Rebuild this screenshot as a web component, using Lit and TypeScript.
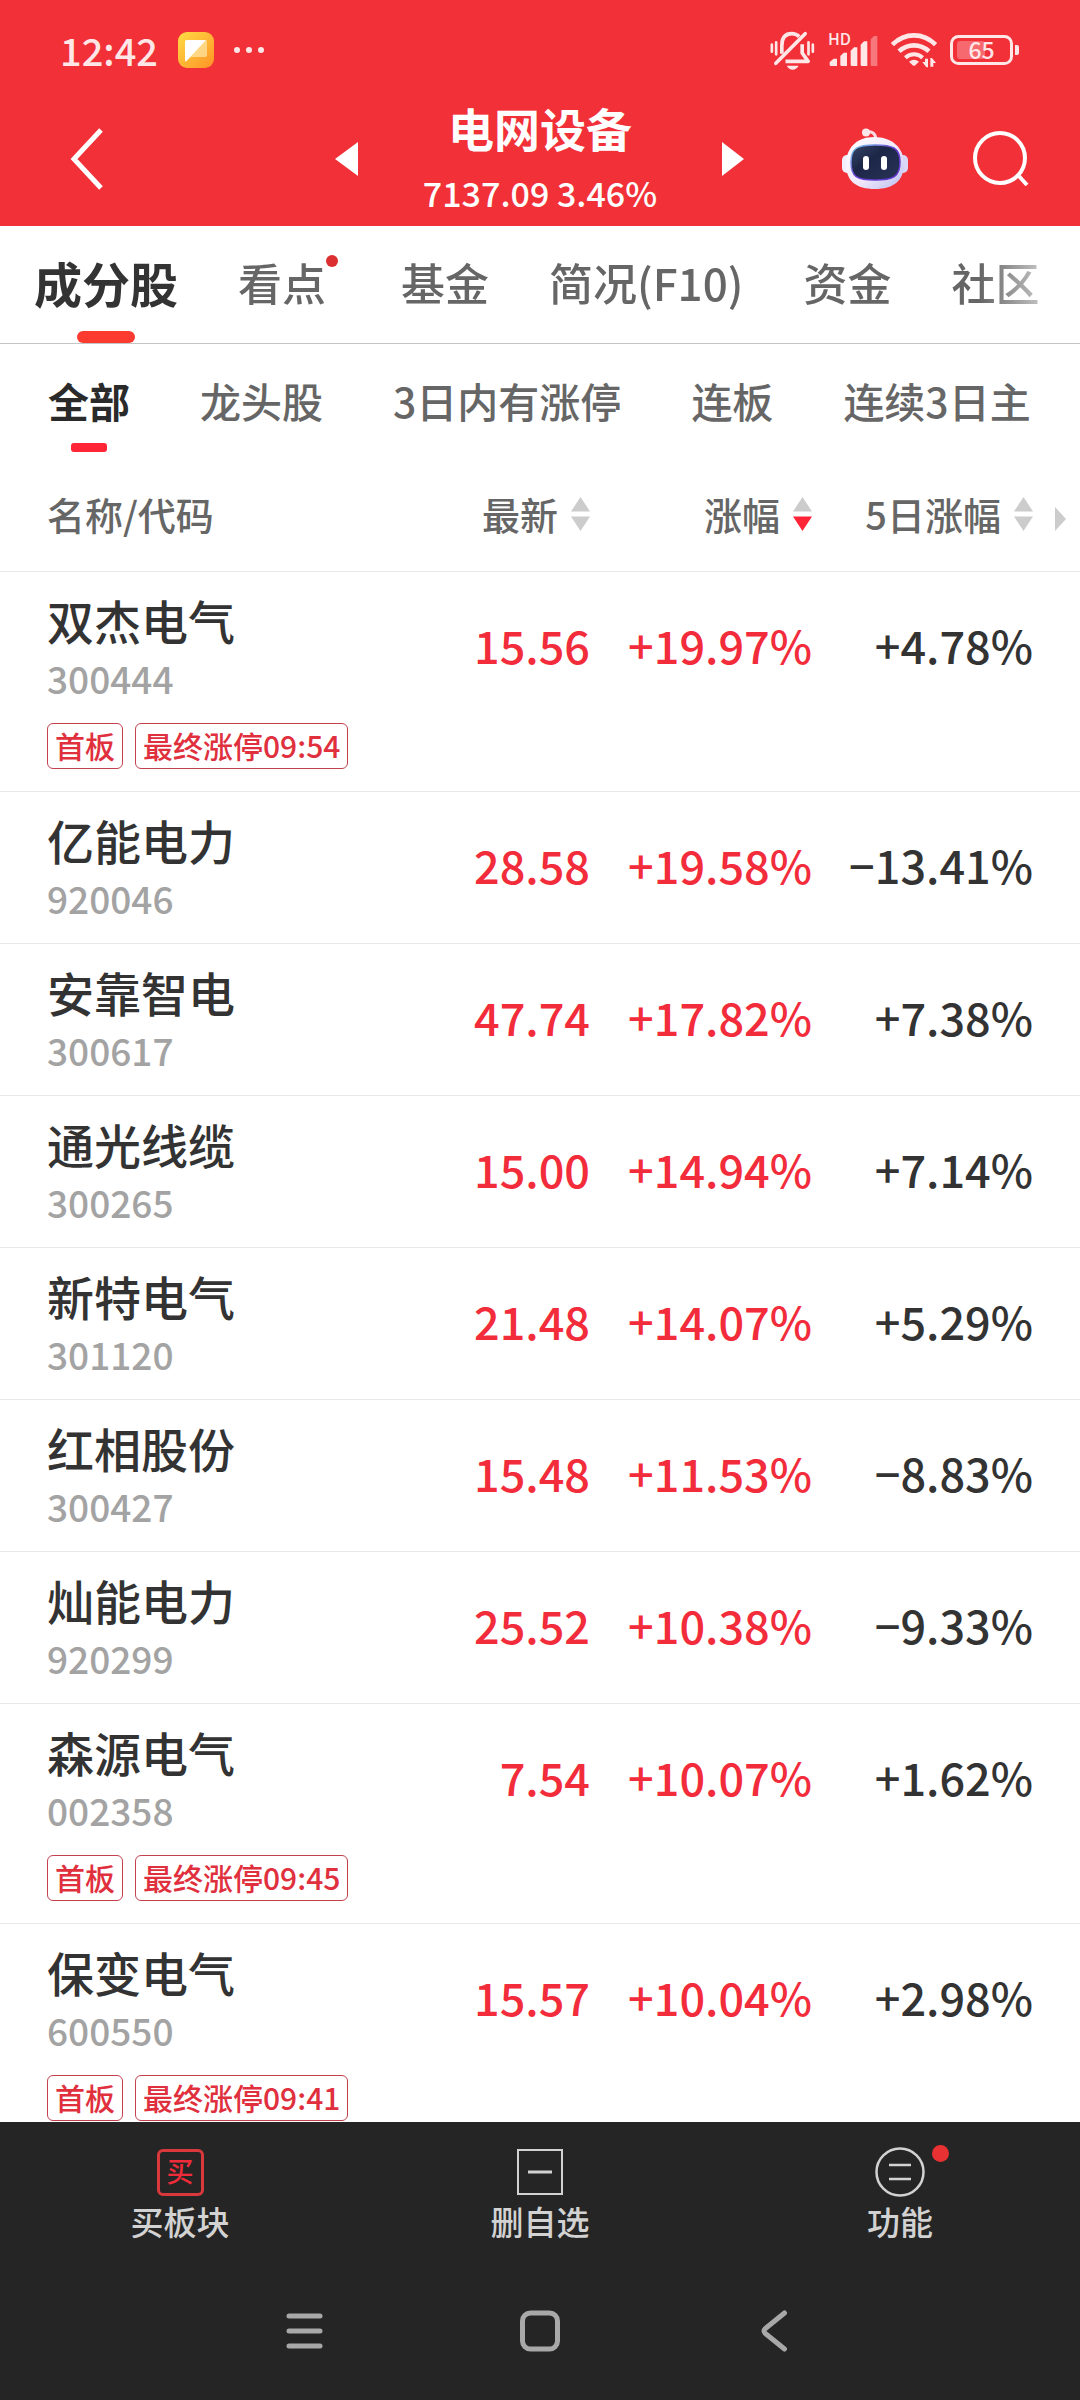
import { LitElement, html, css, svg } from "lit";
import { customElement, property, state } from "lit/decorators.js";
import { classMap } from "lit/directives/class-map.js";

interface Stock {
  name: string;
  code: string;
  price: string;
  change: string;
  change5: string;
  tags?: string[];
}

const STOCKS: Stock[] = [
  { name: "双杰电气", code: "300444", price: "15.56", change: "+19.97%", change5: "+4.78%", tags: ["首板", "最终涨停09:54"] },
  { name: "亿能电力", code: "920046", price: "28.58", change: "+19.58%", change5: "−13.41%" },
  { name: "安靠智电", code: "300617", price: "47.74", change: "+17.82%", change5: "+7.38%" },
  { name: "通光线缆", code: "300265", price: "15.00", change: "+14.94%", change5: "+7.14%" },
  { name: "新特电气", code: "301120", price: "21.48", change: "+14.07%", change5: "+5.29%" },
  { name: "红相股份", code: "300427", price: "15.48", change: "+11.53%", change5: "−8.83%" },
  { name: "灿能电力", code: "920299", price: "25.52", change: "+10.38%", change5: "−9.33%" },
  { name: "森源电气", code: "002358", price: "7.54", change: "+10.07%", change5: "+1.62%", tags: ["首板", "最终涨停09:45"] },
  { name: "保变电气", code: "600550", price: "15.57", change: "+10.04%", change5: "+2.98%", tags: ["首板", "最终涨停09:41"] },
];

const FONT = css`"Noto Sans CJK SC", sans-serif`;

const resets = css`
  :host,
  * {
    box-sizing: border-box;
  }
  button {
    appearance: none;
    border: 0;
    padding: 0;
    margin: 0;
    background: none;
    font: inherit;
    color: inherit;
    white-space: nowrap;
    cursor: pointer;
  }
  svg {
    display: block;
    flex: none;
  }
`;

@customElement("status-bar")
class StatusBar extends LitElement {
  static styles = [
    resets,
    css`
      :host {
        display: flex;
        align-items: center;
        justify-content: space-between;
        height: 92px;
        padding: 8px 60px 0;
        color: #ffe6e7;
      }
      .group {
        display: flex;
        align-items: center;
      }
      .left {
        gap: 20px;
      }
      .right {
        gap: 13px;
      }
      .time {
        font-size: 38px;
        line-height: 48px;
        font-weight: 500;
      }
      .signal,
      .battery {
        position: relative;
      }
      .hd {
        position: absolute;
        left: 0;
        top: 0;
        font-size: 16px;
        line-height: 12px;
        font-weight: 500;
      }
      .level {
        position: absolute;
        left: 0;
        top: 0;
        width: 63px;
        font-size: 23px;
        line-height: 28px;
        font-weight: 500;
        text-align: center;
      }
    `,
  ];

  render() {
    return html`
      <div class="group left">
        <span class="time">12:42</span>
        <svg width="36" height="36" viewBox="0 0 36 36" aria-hidden="true">
          <defs>
            <linearGradient id="note" x1="0" y1="0" x2="1" y2="1">
              <stop offset="0" stop-color="#ffdc45" />
              <stop offset="1" stop-color="#ff9226" />
            </linearGradient>
          </defs>
          <rect width="36" height="36" rx="9" fill="url(#note)" />
          <path d="M9 8H27.500Q29 8 29 10V23Q29 25 27 25H13L7 29.500V10Q7 8 9 8Z" fill="#ffe3a0" opacity=".75" />
          <path d="M9 8H28L8.500 29Q7 30 7 28V10Q7 8 9 8Z" fill="#fff" />
        </svg>
        <svg width="32" height="8" viewBox="-2 0 32 8" fill="currentColor" aria-hidden="true">
          <circle cx="1" cy="4" r="3" /><circle cx="13" cy="4" r="3" /><circle cx="25" cy="4" r="3" />
        </svg>
      </div>
      <div class="group right">
        <svg width="45" height="39" viewBox="32 18 134 117" fill="none" stroke="currentColor" stroke-width="9" aria-hidden="true">
          <path d="M37 59V80M50 52V88M147 52V88M160 59V80" stroke-width="8" stroke-linecap="round" />
          <path d="M67 86V62C67 37 79 26 97 26C107 26 113 29 119 35" stroke-width="11" />
          <path d="M49 115L137 26" stroke-linecap="round" stroke-width="11" />
          <path d="M128 58V84L146 109H78" stroke-linejoin="round" stroke-width="11" />
          <path d="M82 122H117Q112 133 99.500 134Q87 133 82 122Z" fill="currentColor" stroke="none" />
        </svg>
        <div class="signal">
          <svg width="50" height="36" viewBox="202 20 150 108" fill="currentColor" aria-hidden="true">
            <path d="M207 118V110L219 100H229V122H211Q207 122 207 118Z" />
            <path d="M239 118V92L249 82H259V122H243Q239 122 239 118Z" />
            <path d="M270 118V76L280 66H290V122H274Q270 122 270 118Z" />
            <path d="M300 118V58L310 48H320V122H304Q300 122 300 118Z" />
            <path d="M330 118V42L340 32H350V122H334Q330 122 330 118Z" opacity=".4" />
          </svg>
          <span class="hd">HD</span>
        </div>
        <svg width="46" height="36" viewBox="390 24 138 108" fill="none" stroke="currentColor" stroke-width="14" aria-hidden="true">
          <path d="M394 62Q422 34 459 34Q496 34 524 62" />
          <path d="M414 82Q434 64 459 64Q484 64 504 82" />
          <path d="M433 101Q444 91 459 91Q474 91 485 101" stroke-width="12" />
          <path d="M444 113Q459 101 474 113L463 124Q459 127 455 124Z" fill="currentColor" stroke="none" />
          <path d="M484 114H492V104H501V130H496ZM508 130V102H513L525 117H517V128H508Z" fill="currentColor" stroke="none" />
        </svg>
        <div class="battery">
          <svg width="70" height="30" viewBox="0 0 70 30" aria-hidden="true">
            <rect x="7" y="6" width="28" height="18" rx="3" fill="#fff" opacity=".28" />
            <rect x="1.500" y="1.500" width="60" height="27" rx="7" fill="none" stroke="currentColor" stroke-width="3" />
            <path d="M65 10H67Q69 10 69 12V18Q69 20 67 20H65Z" fill="currentColor" />
          </svg>
          <span class="level">65</span>
        </div>
      </div>
    `;
  }
}

@customElement("board-header")
class BoardHeader extends LitElement {
  @property() name = "";
  @property() quote = "";

  static styles = [
    resets,
    css`
      :host {
        display: grid;
        grid-template-columns: 1fr auto 1fr;
        align-items: center;
        height: 134px;
        padding: 0 51px;
        color: #fff;
      }
      .center {
        display: flex;
        align-items: center;
        justify-content: center;
        gap: 65px;
      }
      .titles {
        text-align: center;
      }
      .title {
        margin: 0;
        font-size: 46px;
        line-height: 68px;
        font-weight: 700;
      }
      .quote {
        margin: 0;
        font-size: 34px;
        line-height: 64px;
        font-weight: 500;
      }
      .right {
        display: flex;
        align-items: center;
        justify-content: flex-end;
        gap: 65px;
      }
      .back {
        justify-self: start;
        padding: 0 19px;
      }
    `,
  ];

  render() {
    return html`
      <button class="back" aria-label="返回">
        <svg width="34" height="62" viewBox="0 0 34 62" fill="none" stroke="#fff" stroke-width="5">
          <path d="M31 2L4 31L31 60" />
        </svg>
      </button>
      <div class="center">
        <button aria-label="上一个">
          <svg width="23" height="34" viewBox="0 0 23 34" fill="#fff"><path d="M23 0V34L0 17Z" /></svg>
        </button>
        <div class="titles">
          <h1 class="title">${this.name}</h1>
          <p class="quote">${this.quote}</p>
        </div>
        <button aria-label="下一个">
          <svg width="23" height="34" viewBox="0 0 23 34" fill="#fff"><path d="M0 0V34L22 17Z" /></svg>
        </button>
      </div>
      <div class="right">
        <button aria-label="智能助手">
          <svg width="66" height="62" viewBox="0 0 66 62">
            <defs>
              <linearGradient id="shell" x1="0" y1="0" x2="1" y2="1">
                <stop offset="0" stop-color="#fff" />
                <stop offset=".55" stop-color="#f1e9fb" />
                <stop offset="1" stop-color="#b9bdf0" />
              </linearGradient>
              <linearGradient id="rim" x1="0" y1="0" x2="1" y2="1">
                <stop offset="0" stop-color="#7fd6ee" />
                <stop offset=".5" stop-color="#6a3fd0" />
                <stop offset="1" stop-color="#5b35c8" />
              </linearGradient>
              <linearGradient id="face" x1="0" y1="0" x2="1" y2="1">
                <stop offset="0" stop-color="#394668" />
                <stop offset=".4" stop-color="#1c2748" />
                <stop offset="1" stop-color="#273256" />
              </linearGradient>
            </defs>
            <path d="M23 4Q33 2 34 11" fill="none" stroke="#fbd9e0" stroke-width="3" />
            <circle cx="24" cy="4.500" r="4" fill="#fde6ea" />
            <rect x="0" y="27" width="10" height="18" rx="5" fill="#f3eefc" />
            <rect x="56" y="27" width="10" height="18" rx="5" fill="#d9d6f6" />
            <path d="M32 9C50 9 62 20 62 36C62 53 51 61 33 61C14 61 4 53 4 36C4 20 15 9 32 9Z" fill="url(#shell)" />
            <path d="M33 17C51 17 58 20 58 34C58 49 51 52 33 52C15 52 9 49 9 34C9 20 15 17 33 17Z" fill="url(#face)" stroke="url(#rim)" stroke-width="1.500" />
            <rect x="21" y="28" width="6" height="14" rx="3" fill="#fff" />
            <rect x="39" y="28" width="6" height="14" rx="3" fill="#fff" />
          </svg>
        </button>
        <button aria-label="搜索">
          <svg width="56" height="56" viewBox="0 0 56 56" fill="none" stroke="#fff" stroke-width="4">
            <circle cx="27" cy="27" r="25" /><path d="M44 43L54 54" />
          </svg>
        </button>
      </div>
    `;
  }
}

@customElement("board-tabs")
class BoardTabs extends LitElement {
  @state() private main = 0;
  @state() private sub = 0;

  private mainTabs = ["成分股", "看点", "基金", "简况(F10)", "资金", "社区"];
  private subTabs = ["全部", "龙头股", "3日内有涨停", "连板", "连续3日主"];

  static styles = [
    resets,
    css`
      :host {
        display: block;
      }
      .main {
        border-bottom: 1px solid #c4c6c6;
        padding: 0 40px 0 34px;
      }
      .scroll {
        display: flex;
        gap: 60px;
        overflow: hidden;
        -webkit-mask-image: linear-gradient(to right, #000 calc(100% - 60px), rgba(0, 0, 0, 0.4));
        mask-image: linear-gradient(to right, #000 calc(100% - 60px), rgba(0, 0, 0, 0.4));
      }
      .tab {
        position: relative;
        flex: none;
        height: 117px;
        padding-bottom: 6px;
        font-size: 44px;
        line-height: 110px;
        font-weight: 500;
        color: #666;
      }
      .tab.active {
        font-size: 48px;
        font-weight: 700;
        color: #333;
      }
      .tab.active::after {
        content: "";
        position: absolute;
        left: 50%;
        bottom: 0;
        width: 58px;
        height: 12px;
        margin-left: -29px;
        border-radius: 6px;
        background: #fb3b30;
      }
      .tab.fresh {
        padding-right: 15px;
      }
      .tab.fresh::before {
        content: "";
        position: absolute;
        right: 3px;
        top: 29px;
        width: 12px;
        height: 12px;
        border-radius: 50%;
        background: #dc2f30;
      }
      .sub {
        display: flex;
        gap: 70px;
        padding: 0 48px;
        overflow: hidden;
      }
      .chip {
        position: relative;
        flex: none;
        height: 117px;
        padding-bottom: 4px;
        font-size: 41px;
        line-height: 113px;
        font-weight: 500;
        color: #666;
      }
      .chip.active {
        font-weight: 700;
        color: #2a2a2a;
      }
      .chip.active::after {
        content: "";
        position: absolute;
        left: 50%;
        bottom: 9px;
        width: 36px;
        height: 9px;
        margin-left: -18px;
        border-radius: 3px;
        background: #ff2436;
      }
    `,
  ];

  render() {
    return html`
      <nav class="main">
        <div class="scroll">
          ${this.mainTabs.map(
            (t, i) => html`<button
              class=${classMap({ tab: true, active: i === this.main, fresh: i === 1 })}
              @click=${() => (this.main = i)}
            >${t}</button>`
          )}
        </div>
      </nav>
      <nav class="sub">
        ${this.subTabs.map(
          (t, i) => html`<button
            class=${classMap({ chip: true, active: i === this.sub })}
            @click=${() => (this.sub = i)}
          >${t}</button>`
        )}
      </nav>
    `;
  }
}

@customElement("stock-table")
class StockTable extends LitElement {
  @property({ attribute: false }) stocks: Stock[] = [];

  static styles = [
    resets,
    css`
      :host {
        display: block;
      }
      .table {
        width: 100%;
        table-layout: fixed;
        border-collapse: separate;
        border-spacing: 0;
      }
      .c-price {
        width: 200px;
      }
      .c-change {
        width: 222px;
      }
      .c-five {
        width: 268px;
      }
      th,
      td {
        padding: 0;
        border-bottom: 1px solid #e8e8e8;
        text-align: right;
        vertical-align: top;
        white-space: nowrap;
      }
      th {
        position: relative;
        height: 111px;
        font-size: 38px;
        line-height: 106px;
        font-weight: 500;
        color: #666;
      }
      th.first,
      td.first {
        padding-left: 47px;
        text-align: left;
      }
      th.last,
      td.last {
        padding-right: 47px;
      }
      .sort {
        display: inline-flex;
        align-items: center;
        gap: 13px;
        line-height: 106px;
      }
      .more {
        position: absolute;
        right: 14px;
        top: 46px;
      }
      td {
        font-size: 45px;
        line-height: 146px;
        font-weight: 500;
        color: #333;
      }
      td.up {
        color: #f22c3b;
      }
      .name {
        margin-top: 20px;
        font-size: 47px;
        line-height: 56px;
      }
      .code {
        margin-bottom: 15px;
        font-size: 37px;
        line-height: 60px;
        color: #a3a3a3;
      }
      .tags {
        display: flex;
        gap: 12px;
        margin-bottom: 22px;
      }
      .tag {
        height: 46px;
        padding: 0 7px;
        border: 1px solid #c4404c;
        border-radius: 6px;
        font-size: 30px;
        line-height: 42px;
        color: #e0303e;
      }
    `,
  ];

  private header(label: string, down = false) {
    return html`<button class="sort">
      ${label}
      <svg width="19" height="34" viewBox="0 0 19 34" fill="#ccc" aria-hidden="true">
        <path d="M9.500 0L19 14.500H0Z" />
        ${svg`<path d="M0 19.500H19L9.500 34Z" fill=${down ? "#ff2436" : "#ccc"} />`}
      </svg>
    </button>`;
  }

  render() {
    return html`
      <table class="table">
        <colgroup>
          <col /><col class="c-price" /><col class="c-change" /><col class="c-five" />
        </colgroup>
        <thead>
          <tr>
            <th class="first">名称/代码</th>
            <th>${this.header("最新")}</th>
            <th>${this.header("涨幅", true)}</th>
            <th class="last">
              ${this.header("5日涨幅")}
              <svg class="more" width="11" height="24" viewBox="0 0 11 24" fill="#ccc" aria-hidden="true">
                <path d="M0 0L11 12L0 24Z" />
              </svg>
            </th>
          </tr>
        </thead>
        <tbody>
          ${this.stocks.map(
            (s) => html`<tr>
              <td class="first">
                <div class="name">${s.name}</div>
                <div class="code">${s.code}</div>
                ${s.tags
                  ? html`<div class="tags">${s.tags.map((t) => html`<span class="tag">${t}</span>`)}</div>`
                  : null}
              </td>
              <td class="up">${s.price}</td>
              <td class="up">${s.change}</td>
              <td class="last">${s.change5}</td>
            </tr>`
          )}
        </tbody>
      </table>
    `;
  }
}

@customElement("bottom-bar")
class BottomBar extends LitElement {
  static styles = [
    resets,
    css`
      :host {
        display: block;
        background: #252525;
        color: #d2d2d2;
      }
      .actions {
        display: grid;
        grid-template-columns: repeat(3, 1fr);
        padding-top: 25px;
      }
      .action {
        display: flex;
        flex-direction: column;
        align-items: center;
        font-size: 33px;
        line-height: 48px;
        font-weight: 500;
      }
      .icon {
        position: relative;
        display: flex;
        align-items: center;
        justify-content: center;
        width: 50px;
        height: 50px;
      }
      .buy {
        width: 47px;
        height: 47px;
        border: 3px solid #d9383d;
        border-radius: 6px;
        font-size: 27px;
        line-height: 38px;
        color: #f02c3a;
      }
      .dot {
        position: absolute;
        left: 57px;
        top: -2px;
        width: 17px;
        height: 17px;
        border-radius: 50%;
        background: #e83132;
      }
      .system {
        display: flex;
        justify-content: center;
        gap: 195px;
        padding: 65px 0 48px;
        color: #a8a8a8;
      }
    `,
  ];

  render() {
    return html`
      <div class="actions">
        <button class="action">
          <span class="icon"><span class="buy">买</span></span>
          买板块
        </button>
        <button class="action">
          <span class="icon">
            <svg width="46" height="46" viewBox="0 0 46 46" fill="none" stroke="currentColor" stroke-width="2">
              <rect x="1" y="1" width="44" height="44" /><path d="M11 23H35" stroke-width="3" />
            </svg>
          </span>
          删自选
        </button>
        <button class="action">
          <span class="icon">
            <svg width="50" height="50" viewBox="0 0 50 50" fill="none" stroke="currentColor" stroke-width="2.500">
              <circle cx="25" cy="25" r="23.500" /><path d="M14 18H36M14 32H36" />
            </svg>
            <span class="dot"></span>
          </span>
          功能
        </button>
      </div>
      <div class="system">
        <button aria-label="最近任务">
          <svg width="40" height="42" viewBox="0 0 40 42" stroke="currentColor" stroke-width="5" stroke-linecap="round">
            <path d="M4 6H35M4 21H35M4 36H35" />
          </svg>
        </button>
        <button aria-label="主屏幕">
          <svg width="40" height="42" viewBox="0 0 40 42" fill="none" stroke="currentColor" stroke-width="5">
            <rect x="2.500" y="3" width="35" height="36" rx="8" />
          </svg>
        </button>
        <button aria-label="系统返回">
          <svg width="40" height="42" viewBox="0 0 40 42" fill="none" stroke="currentColor" stroke-width="5" stroke-linecap="round">
            <path d="M29.500 3L11 18Q7 21 11 24L29.500 39" />
          </svg>
        </button>
      </div>
    `;
  }
}

@customElement("app-root")
class AppRoot extends LitElement {
  static styles = css`
    :host {
      display: flex;
      flex-direction: column;
      height: 100vh;
      overflow: hidden;
      background: #fff;
      font-family: ${FONT};
    }
    .top {
      flex: none;
      background: #f13038;
    }
    .list {
      flex: 1;
      min-height: 0;
      overflow: hidden;
    }
    .bottom {
      flex: none;
    }
  `;

  render() {
    return html`
      <header class="top">
        <status-bar></status-bar>
        <board-header name="电网设备" quote="7137.09 3.46%"></board-header>
      </header>
      <board-tabs></board-tabs>
      <main class="list">
        <stock-table .stocks=${STOCKS}></stock-table>
      </main>
      <bottom-bar class="bottom"></bottom-bar>
    `;
  }
}
